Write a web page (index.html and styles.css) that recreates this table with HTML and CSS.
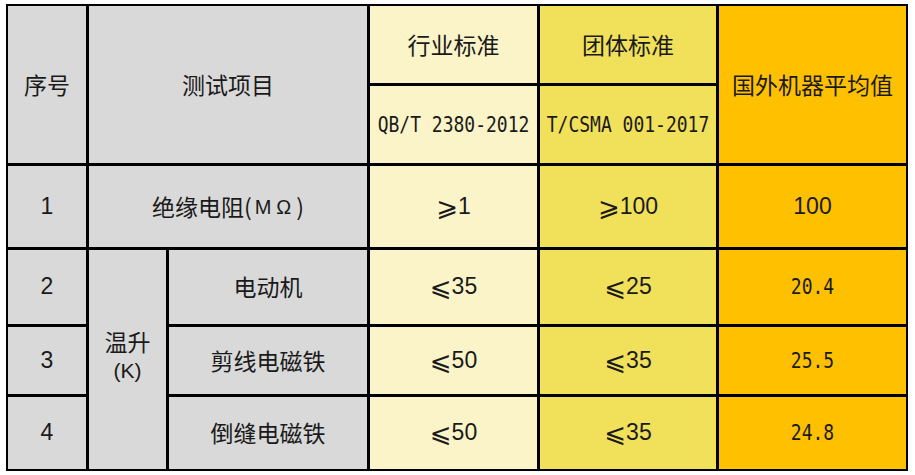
FILE: index.html
```html
<!DOCTYPE html>
<html lang="zh-CN">
<head>
<meta charset="utf-8">
<title>测试对比表</title>
<link rel="stylesheet" href="styles.css">
</head>
<body>
<div class="sheet">
  <div class="cell gray span-r2">序号</div>
  <div class="cell gray span-c2 span-r2">测试项目</div>
  <div class="cell lt">行业标准</div>
  <div class="cell md">团体标准</div>
  <div class="cell og span-r2">国外机器平均值</div>
  <div class="cell lt"><span class="hw">QB/T 2380-2012</span></div>
  <div class="cell md"><span class="hw">T/CSMA 001-2017</span></div>

  <div class="cell gray num">1</div>
  <div class="cell gray span-c2">绝缘电阻(<span class="unit">MΩ</span>)</div>
  <div class="cell lt num"><span class="sym">⩾</span>1</div>
  <div class="cell md num"><span class="sym">⩾</span>100</div>
  <div class="cell og num">100</div>

  <div class="cell gray num">2</div>
  <div class="cell gray span-r3 stack"><span>温升</span><span class="num">(K)</span></div>
  <div class="cell gray">电动机</div>
  <div class="cell lt num"><span class="sym">⩽</span>35</div>
  <div class="cell md num"><span class="sym">⩽</span>25</div>
  <div class="cell og"><span class="hw">20.4</span></div>

  <div class="cell gray num">3</div>
  <div class="cell gray">剪线电磁铁</div>
  <div class="cell lt num"><span class="sym">⩽</span>50</div>
  <div class="cell md num"><span class="sym">⩽</span>35</div>
  <div class="cell og"><span class="hw">25.5</span></div>

  <div class="cell gray num">4</div>
  <div class="cell gray">倒缝电磁铁</div>
  <div class="cell lt num"><span class="sym">⩽</span>50</div>
  <div class="cell md num"><span class="sym">⩽</span>35</div>
  <div class="cell og"><span class="hw">24.8</span></div>
</div>
</body>
</html>
```

FILE: styles.css
```css
html, body {
  margin: 0;
  padding: 0;
  background: #ffffff;
}

body {
  padding: 4px 0 0 6px;
  font-family: "Noto Sans CJK SC", "Liberation Sans", sans-serif;
  color: #1a1a1a;
}

.sheet {
  display: grid;
  grid-template-columns: 78px 77px 198px 167px 176px 187px;
  grid-template-rows: 77px 77px 81px 74px 67px 72px;
  gap: 3px;
  padding: 2px;
  background: #000000;
  width: max-content;
}

.cell {
  display: flex;
  align-items: center;
  justify-content: center;
  text-align: center;
  font-size: 23px;
  line-height: 1.2;
}

.span-r2 { grid-row: span 2; }
.span-r3 { grid-row: span 3; }
.span-c2 { grid-column: span 2; }

.stack {
  flex-direction: column;
  gap: 2px;
  padding-bottom: 8px;
}

.stack .num {
  font-size: 21px;
}

.gray { background: #d9d9d9; }
.lt { background: #faf4c8; }
.md { background: #f0e05a; }
.og { background: #ffc000; }

.num {
  font-family: "Liberation Sans", "DejaVu Sans", sans-serif;
  font-size: 23px;
}

.sym {
  font-family: "DejaVu Sans", sans-serif;
  font-size: 26px;
  line-height: 1;
}

.unit {
  font-family: "Liberation Sans", sans-serif;
  font-size: 20px;
  letter-spacing: 5px;
  padding-left: 3px;
}

.hw {
  display: inline-block;
  font-family: "DejaVu Sans Mono", monospace;
  font-size: 18px;
  transform: scaleY(1.22);
}
```
